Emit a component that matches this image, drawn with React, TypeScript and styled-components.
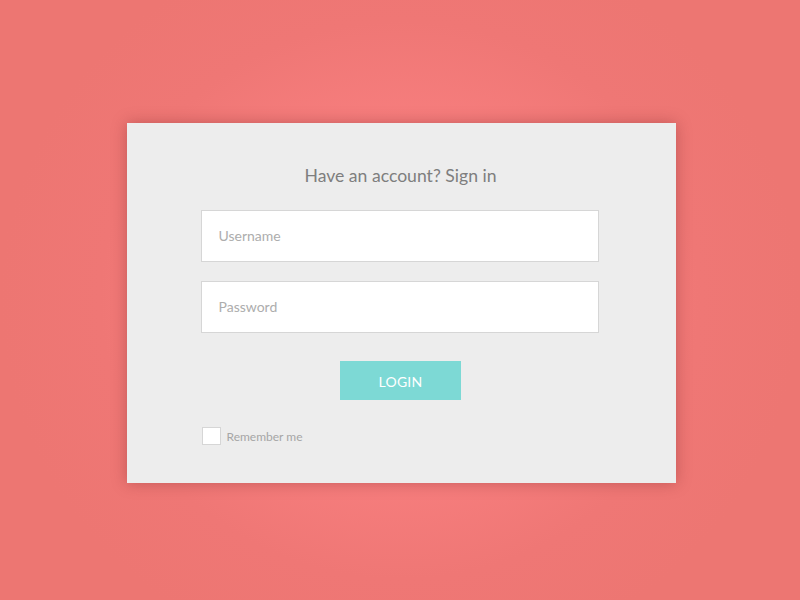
import styled, { createGlobalStyle } from "styled-components";

const GlobalStyle = createGlobalStyle`
  html, body {
    margin: 0;
    padding: 0;
  }
  body {
    font-family: Lato, "Open Sans", sans-serif;
  }
`;

const Page = styled.div`
  width: 800px;
  height: 600px;
  box-sizing: border-box;
  padding: 6px 0 0 2px;
  display: flex;
  align-items: center;
  justify-content: center;
  background: radial-gradient(
    ellipse 50% 62% at 50% 50%,
    #fd8585 0%,
    #f77e7e 45%,
    #ef7775 75%,
    #ed7672 100%
  );
`;

const Card = styled.form`
  width: 549px;
  height: 360px;
  box-sizing: border-box;
  padding: 41px 77px 0 74px;
  background: #ededed;
  box-shadow: 0 0 14px rgba(120, 40, 40, 0.38);
  display: flex;
  flex-direction: column;
`;

const Title = styled.h2`
  margin: 0 0 22px 2px;
  font-size: 17.6px;
  line-height: 24px;
  font-weight: 400;
  color: #7e7e7e;
  text-align: center;
`;

const Field = styled.input`
  width: 398px;
  height: 52px;
  box-sizing: border-box;
  padding: 0 17px 1px;
  margin-bottom: ${(p: { $gap: number }) => p.$gap}px;
  border: 1px solid #d6d6d6;
  background: #fff;
  font-family: Lato, sans-serif;
  font-size: 14px;
  color: #555;
  outline: none;

  &::placeholder {
    color: #adadad;
  }
`;

const LoginButton = styled.button`
  align-self: center;
  margin-left: 2px;
  width: 121px;
  height: 39px;
  padding-top: 2px;
  border: none;
  background: #7dd9d5;
  color: #fff;
  font-family: Lato, sans-serif;
  font-size: 14px;
  letter-spacing: 0.2px;
  cursor: pointer;
`;

const Remember = styled.label`
  margin-top: 27px;
  display: flex;
  align-items: center;
  gap: 6px;
  font-size: 12px;
  color: #a6a6a6;
  cursor: pointer;
`;

const Box = styled.span`
  width: 19px;
  height: 18px;
  box-sizing: border-box;
  border: 1px solid #d6d6d6;
  background: #fff;
  margin-left: 1px;
`;

export default function App() {
  return (
    <>
      <GlobalStyle />
      <Page>
        <Card onSubmit={(e) => e.preventDefault()}>
          <Title>Have an account? Sign in</Title>
          <Field type="text" placeholder="Username" $gap={19} />
          <Field type="password" placeholder="Password" $gap={28} />
          <LoginButton type="submit">LOGIN</LoginButton>
          <Remember>
            <Box />
            Remember me
          </Remember>
        </Card>
      </Page>
    </>
  );
}
